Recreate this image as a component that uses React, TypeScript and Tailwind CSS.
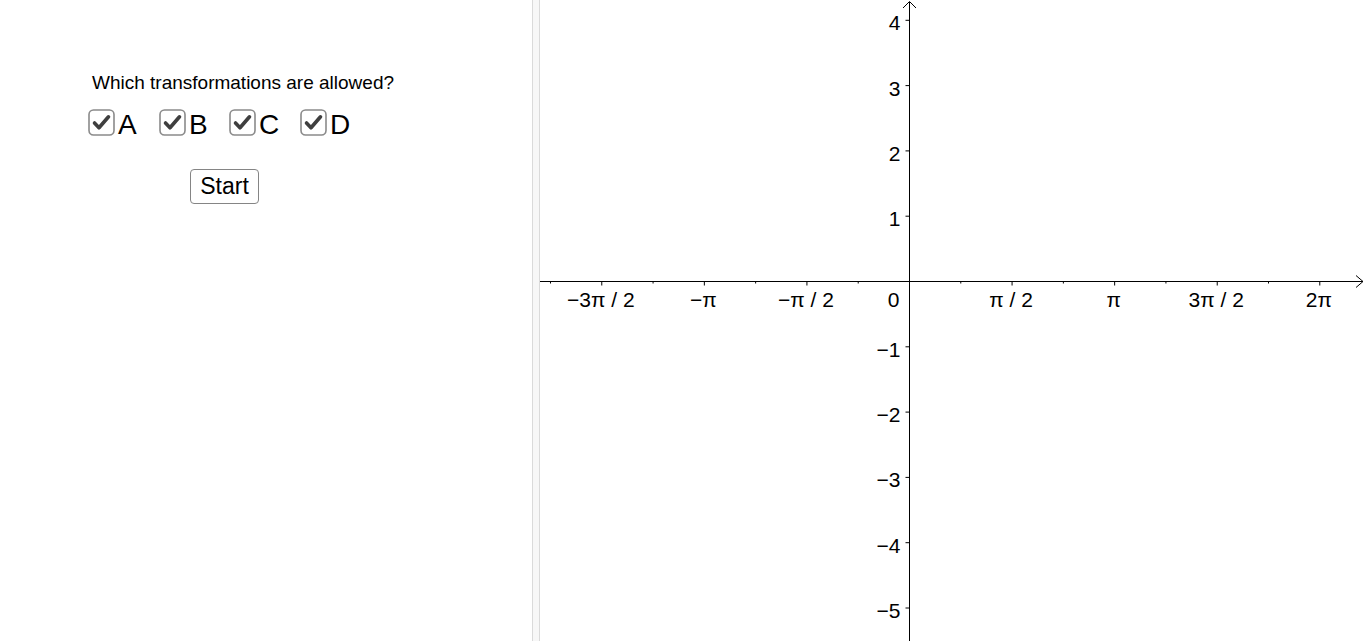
import React from "react";

// graph geometry (px inside the svg)
const W = 826;
const H = 641;
const OX = 369.5; // y axis
const OY = 281.5; // x axis
const UNIT = 65.3;
const HALF_PI = (Math.PI / 2) * UNIT;

const xLabels: { k: number; text: string }[] = [
  { k: -3, text: "−3π / 2" },
  { k: -2, text: "−π" },
  { k: -1, text: "−π / 2" },
  { k: 1, text: "π / 2" },
  { k: 2, text: "π" },
  { k: 3, text: "3π / 2" },
  { k: 4, text: "2π" },
];

const yLabels = [4, 3, 2, 1, -1, -2, -3, -4, -5];

function CheckIcon() {
  return (
    <svg width="27" height="27" viewBox="0 0 27 27" className="block shrink-0">
      <rect x="1" y="1" width="25" height="25" rx="4.5" fill="#fff" stroke="#8a8a8a" strokeWidth="1.6" />
      <path
        d="M6.5 14 L11 18.8 L20.5 7.8"
        fill="none"
        stroke="#3f3f3f"
        strokeWidth="3.6"
        strokeLinecap="round"
        strokeLinejoin="round"
      />
    </svg>
  );
}

function Option({ label, width }: { label: string; width: string }) {
  return (
    <label className={`flex items-start gap-[3px] ${width}`}>
      <CheckIcon />
      <span className="mt-[2px] text-[28px] leading-none text-black">{label}</span>
    </label>
  );
}

function Graph() {
  const majors: number[] = [];
  const minors: number[] = [];
  for (let k = -4; k <= 5; k++) {
    majors.push(OX + k * HALF_PI);
    minors.push(OX + (k + 0.5) * HALF_PI);
  }

  return (
    <svg width={W} height={H} className="block" fill="#000">
      {/* x axis */}
      <line x1="0" y1={OY} x2={W - 3} y2={OY} stroke="#000" strokeWidth="1" />
      <polyline
        points={`${W - 10},${OY - 6} ${W - 3},${OY} ${W - 10},${OY + 6}`}
        fill="none"
        stroke="#000"
        strokeWidth="1"
      />
      {majors
        .filter((x) => x > 0 && x < W - 10 && Math.abs(x - OX) > 1)
        .map((x) => (
          <line key={`M${x}`} x1={x} y1={OY} x2={x} y2={OY + 4} stroke="#000" strokeWidth="1" />
        ))}
      {minors
        .filter((x) => x > 0 && x < W - 10)
        .map((x) => (
          <line key={`m${x}`} x1={x} y1={OY} x2={x} y2={OY + 2} stroke="#000" strokeWidth="1" />
        ))}
      {xLabels.map((l) => (
        <text
          key={l.text}
          x={OX + l.k * HALF_PI - 1}
          y={OY + 25.5}
          fontSize="21"
          textAnchor="middle"
        >
          {l.text}
        </text>
      ))}
      <text x={OX - 10} y={OY + 25.5} fontSize="21" textAnchor="end">
        0
      </text>

      {/* y axis */}
      <line x1={OX} y1="2" x2={OX} y2={H} stroke="#000" strokeWidth="1" />
      <polyline
        points={`${OX - 6.5},${8} ${OX},${1.5} ${OX + 6.5},${8}`}
        fill="none"
        stroke="#000"
        strokeWidth="1"
      />
      {yLabels.map((v) => {
        const y = OY - v * UNIT;
        return (
          <g key={v}>
            <line x1={OX - 4} y1={y} x2={OX} y2={y} stroke="#000" strokeWidth="1" />
            <text x={OX - 9} y={y + 10} fontSize="21" textAnchor="end">
              {v < 0 ? `−${-v}` : v}
            </text>
          </g>
        );
      })}
    </svg>
  );
}

export default function App() {
  return (
    <div className="flex h-[641px] w-[1366px] overflow-hidden bg-white font-['Liberation_Sans',Arial,sans-serif] text-black">
      {/* Controls */}
      <div className="w-[532px] shrink-0">
        <p className="ml-[92px] mt-[73px] text-[19px] leading-none">Which transformations are allowed?</p>
        <div className="ml-[88px] mt-[17px] flex">
          <Option label="A" width="w-[71px]" />
          <Option label="B" width="w-[70px]" />
          <Option label="C" width="w-[71px]" />
          <Option label="D" width="w-[60px]" />
        </div>
        <button className="ml-[190px] mt-[30px] flex h-[35px] w-[69px] items-center justify-center rounded-[4px] border border-[#858585] bg-white text-[23px] leading-none text-black">
          Start
        </button>
      </div>

      {/* Splitter */}
      <div className="w-[8px] shrink-0 border-x border-[#dadada] bg-[#f7f7f7]" />

      {/* Graphics view */}
      <div className="flex-1">
        <Graph />
      </div>
    </div>
  );
}
